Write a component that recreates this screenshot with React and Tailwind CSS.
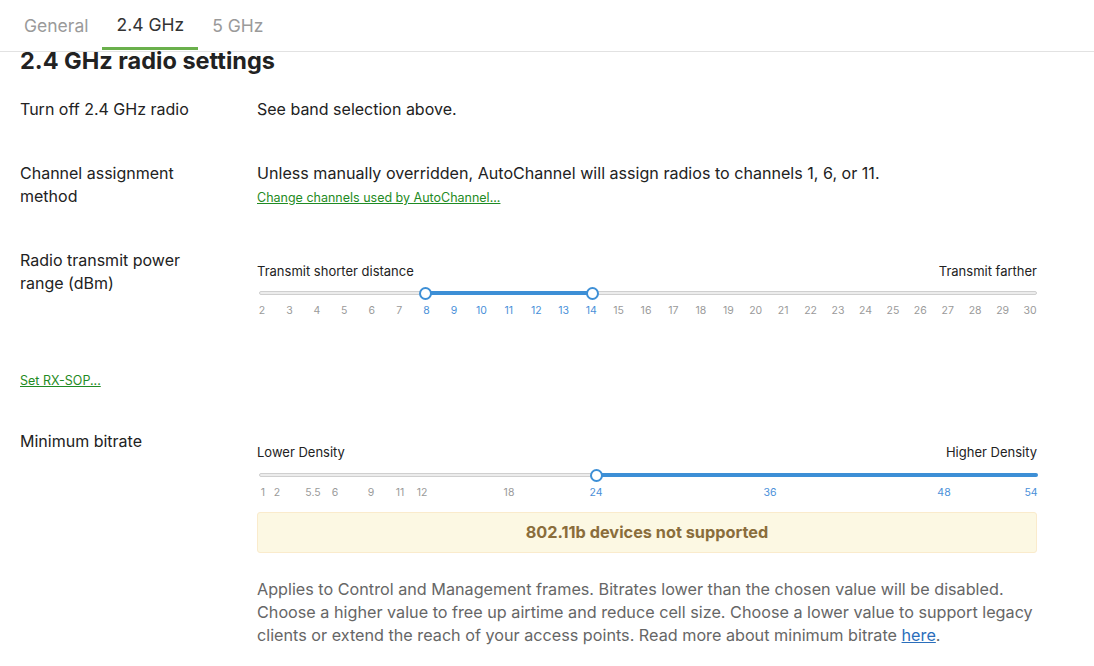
import React from "react";

const powerTicks = Array.from({ length: 29 }, (_, i) => i + 2);
const powerLo = 8;
const powerHi = 14;

const rateTicks = [
  { v: "1", x: 6, on: false },
  { v: "2", x: 20, on: false },
  { v: "5.5", x: 56, on: false },
  { v: "6", x: 78, on: false },
  { v: "9", x: 114, on: false },
  { v: "11", x: 143, on: false },
  { v: "12", x: 165, on: false },
  { v: "18", x: 252, on: false },
  { v: "24", x: 339, on: true },
  { v: "36", x: 513, on: true },
  { v: "48", x: 687, on: true },
  { v: "54", x: 774, on: true },
];

const Thumb = ({ x }) => (
  <span
    className="absolute top-1/2 w-[13px] h-[13px] -ml-[6.5px] -mt-[6.5px] rounded-full bg-white border-2 border-[#3d8fd6]"
    style={{ left: x }}
  />
);

const Track = ({ from, to, thumbs, className = "mt-[6px]" }) => (
  <div className={`relative h-[14px] ${className}`}>
    <div className="absolute left-[2px] right-0 top-[5px] h-[4px] rounded-full bg-[#ececec] border border-[#cfcfcf]" />
    <div
      className="absolute top-[5px] h-[4px] rounded-full bg-[#3d8fd6]"
      style={{ left: from, width: to - from }}
    />
    {thumbs.map((t) => (
      <Thumb key={t} x={t} />
    ))}
  </div>
);

const Ticks = ({ items }) => (
  <div className="relative h-[14px] mt-[4px] text-[10.5px] leading-[14px]">
    {items.map((t) => (
      <span
        key={t.v}
        className={`absolute -translate-x-1/2 ${t.on ? "text-[#4a90d9]" : "text-[#9a9a9a]"}`}
        style={{ left: t.x }}
      >
        {t.v}
      </span>
    ))}
  </div>
);

const Row = ({ label, className = "", children }) => (
  <div className={`flex ${className}`}>
    <div className="w-[237px] shrink-0 text-[16px] leading-[23px] text-[#222]">{label}</div>
    <div className="w-[780px]">{children}</div>
  </div>
);

export default function App() {
  const power = powerTicks.map((v) => ({
    v: String(v),
    x: 5 + (v - 2) * 27.43,
    on: v >= powerLo && v <= powerHi,
  }));

  return (
    <div className="w-[1094px] h-[666px] overflow-hidden bg-white font-['Inter','Noto_Sans',sans-serif] text-[#222]">
      {/* Tabs */}
      <div className="flex items-end h-[52px] pl-[10px] border-b border-[#e2e2e2]">
        <div className="px-[14px] pb-[12px] text-[17.5px] leading-[26px] text-[#9a9a9a]">General</div>
        <div className="px-[14px] pb-[9px] text-[17.5px] leading-[26px] text-[#333] border-b-[3px] border-[#6ab04c] mb-[1px]">
          2.4 GHz
        </div>
        <div className="px-[14px] pb-[12px] text-[17.5px] leading-[26px] text-[#9a9a9a]">5 GHz</div>
      </div>

      <div className="px-[20px]">
        <h1 className="-mt-[2px] text-[23.5px] leading-[22px] font-bold text-[#222]">2.4 GHz radio settings</h1>

        <Row label="Turn off 2.4 GHz radio" className="mt-[26px]">
          <p className="text-[16px] leading-[23px]">See band selection above.</p>
        </Row>

        <Row label={<>Channel assignment<br />method</>} className="mt-[41px]">
          <p className="text-[16.1px] leading-[23px]">
            Unless manually overridden, AutoChannel will assign radios to channels 1, 6, or 11.
          </p>
          <a href="#" className="block mt-[3px] text-[12.5px] leading-[20px] text-[#1f8b24] underline w-fit">
            Change channels used by AutoChannel...
          </a>
        </Row>

        <Row label={<>Radio transmit power<br />range (dBm)</>} className="mt-[41px]">
          <div className="pt-[13px]">
            <div className="flex justify-between text-[13px] leading-[18px] text-[#222]">
              <span>Transmit shorter distance</span>
              <span>Transmit farther</span>
            </div>
            <Track from={168} to={335} thumbs={[168, 335]} />
            <Ticks items={power} />
          </div>
        </Row>

        <a href="#" className="block mt-[54px] text-[12.5px] leading-[18px] text-[#1f8b24] underline w-fit">
          Set RX-SOP...
        </a>

        <Row label="Minimum bitrate" className="mt-[40px]">
          <div className="pt-[13px]">
            <div className="flex justify-between text-[13px] leading-[18px] text-[#222]">
              <span>Lower Density</span>
              <span>Higher Density</span>
            </div>
            <Track from={339} to={781} thumbs={[339]} className="mt-[7px]" />
            <Ticks items={rateTicks} />
            <div className="mt-[12px] h-[41px] flex items-center justify-center rounded-[3px] bg-[#fcf8e3] border border-[#faebcc] text-[16.3px] font-bold text-[#8a6d3b]">
              802.11b devices not supported
            </div>
            <p className="mt-[25px] text-[16.2px] leading-[23px] text-[#666]">
              Applies to Control and Management frames. Bitrates lower than the chosen value will be disabled.
              Choose a higher value to free up airtime and reduce cell size. Choose a lower value to support legacy
              clients or extend the reach of your access points. Read more about minimum bitrate{" "}
              <a href="#" className="text-[#2a6ebb] underline">here</a>.
            </p>
          </div>
        </Row>
      </div>
    </div>
  );
}
